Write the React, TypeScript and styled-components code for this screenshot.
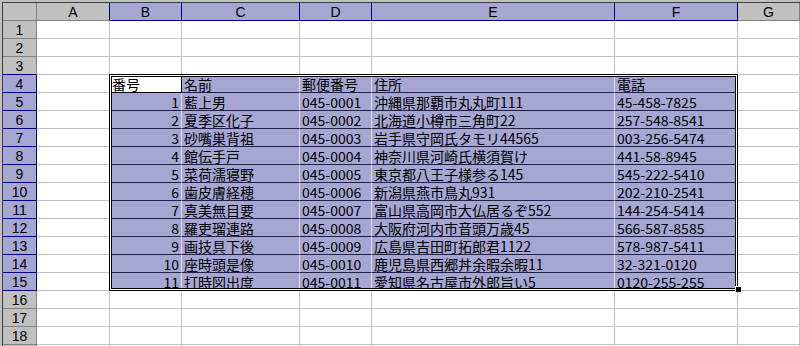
import styled, { createGlobalStyle } from "styled-components";

const GlobalStyle = createGlobalStyle`
  html, body {
    margin: 0;
    padding: 0;
    background: #c0c0c0;
    overflow: hidden;
  }
  body {
    width: 800px;
    height: 346px;
  }
`;

const LAVENDER = "#a6a6d2";
const NAVY = "#000080";

const rows: [string, string, string, string, string][] = [
  ["1", "藍上男", "045-0001", "沖縄県那覇市丸丸町111", "45-458-7825"],
  ["2", "夏季区化子", "045-0002", "北海道小樽市三角町22", "257-548-8541"],
  ["3", "砂嘴巣背祖", "045-0003", "岩手県守岡氏タモリ44565", "003-256-5474"],
  ["4", "館伝手戸", "045-0004", "神奈川県河崎氏横須賀け", "441-58-8945"],
  ["5", "菜荷濡寝野", "045-0005", "東京都八王子様参る145", "545-222-5410"],
  ["6", "歯皮膚経穂", "045-0006", "新潟県燕市鳥丸931", "202-210-2541"],
  ["7", "真美無目要", "045-0007", "富山県高岡市大仏居るぞ552", "144-254-5414"],
  ["8", "羅吏瑠連路", "045-0008", "大阪府河内市音頭万歳45", "566-587-8585"],
  ["9", "画技具下後", "045-0009", "広島県吉田町拓郎君1122", "578-987-5411"],
  ["10", "座時頭是像", "045-0010", "鹿児島県西郷丼余暇余暇11", "32-321-0120"],
  ["11", "打時図出度", "045-0011", "愛知県名古屋市外郎旨い5", "0120-255-255"],
];

const letters = ["A", "B", "C", "D", "E", "F", "G"];

const Frame = styled.div`
  padding: 2px 0 0 2px;
  height: 346px;
  box-sizing: border-box;
  overflow: hidden;
`;

const Sheet = styled.div`
  position: relative;
  display: grid;
  grid-template-columns: 34px 73px 72px 118px 72px 243px 123px 1fr;
  grid-auto-rows: 18px;
  border-left: 1px solid #404040;
  border-top: 1px solid #404040;
  background: #fff;
  font-family: "Noto Sans CJK JP", sans-serif;
  color: #000;
`;

const Head = styled.div<{ $sel?: boolean; $navyRight?: boolean; $navyBottom?: boolean }>`
  box-sizing: border-box;
  display: flex;
  align-items: center;
  justify-content: center;
  background: ${(p) => (p.$sel ? LAVENDER : "#c0c0c0")};
  border-right: 1px solid ${(p) => (p.$sel || p.$navyRight ? NAVY : "#808080")};
  border-bottom: 1px solid ${(p) => (p.$sel || p.$navyBottom ? NAVY : "#808080")};
  font-family: "Liberation Sans", "Noto Sans CJK JP", sans-serif;
  font-size: 14px;
  line-height: 16px;
`;

const Cell = styled.div<{ $sel?: boolean; $active?: boolean; $right?: boolean }>`
  box-sizing: border-box;
  display: flex;
  align-items: center;
  justify-content: ${(p) => (p.$right ? "flex-end" : "flex-start")};
  padding: 0 2px;
  white-space: nowrap;
  font-size: 14px;
  line-height: 16px;
  background: ${(p) => (p.$active ? "#fff" : p.$sel ? LAVENDER : "#fff")};
  border-right: 1px solid
    ${(p) => (p.$active ? "#000" : p.$sel ? "#dcdcee" : "#c0c0c0")};
  border-bottom: 1px solid
    ${(p) => (p.$active ? "#000" : p.$sel ? "#202048" : "#c0c0c0")};
`;

const Selection = styled.div`
  position: absolute;
  left: 106px;
  top: 71px;
  width: 629px;
  height: 217px;
  box-sizing: border-box;
  border: 1px solid #000;
  box-shadow: inset 0 0 0 1px #fff, inset 0 0 0 2px #000;
  pointer-events: none;
`;

const FillHandle = styled.div`
  position: absolute;
  left: 733px;
  top: 284px;
  width: 5px;
  height: 5px;
  background: #000;
  box-shadow: -1px -1px 0 0 #fff;
`;

const App = () => {
  const grid: React.ReactNode[] = [];

  grid.push(<Head key="corner" />);
  letters.forEach((l, i) => {
    const sel = i >= 1 && i <= 5;
    grid.push(
      <Head key={"h" + l} $sel={sel} $navyRight={i === 0}>
        {l}
      </Head>
    );
  });

  for (let r = 1; r <= 19; r++) {
    const inSel = r >= 4 && r <= 15;
    grid.push(
      <Head key={"r" + r} $sel={inSel} $navyBottom={r === 3}>
        {r}
      </Head>
    );
    const data =
      r === 4
        ? ["番号", "名前", "郵便番号", "住所", "電話"]
        : r >= 5 && r <= 15
        ? rows[r - 5]
        : null;
    letters.forEach((l, c) => {
      const colSel = inSel && c >= 1 && c <= 5;
      const text = data && colSel ? data[c - 1] : "";
      grid.push(
        <Cell
          key={l + r}
          $sel={colSel}
          $active={r === 4 && c === 1}
          $right={r >= 5 && c === 1}
        >
          {text}
        </Cell>
      );
    });
  }

  return (
    <>
      <GlobalStyle />
      <Frame>
        <Sheet>
          {grid}
          <Selection />
          <FillHandle />
        </Sheet>
      </Frame>
    </>
  );
};

export default App;
